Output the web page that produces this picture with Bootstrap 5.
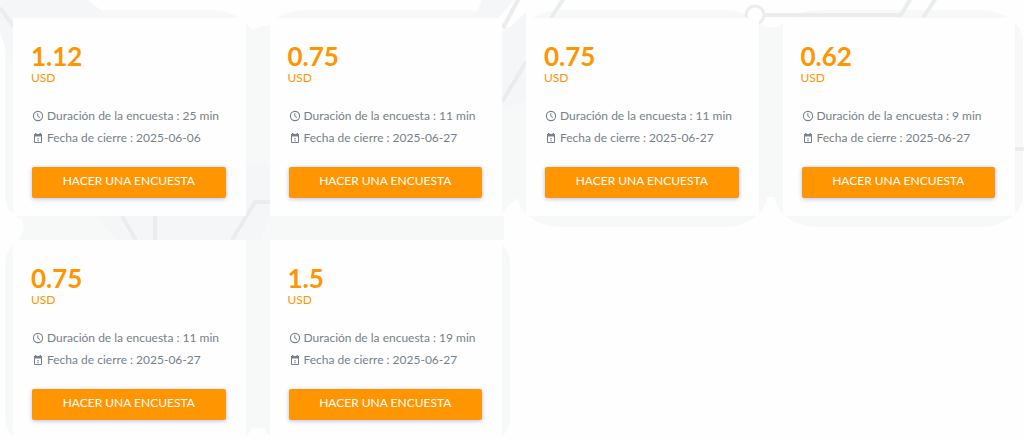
<!DOCTYPE html>
<html lang="es">
<head>
<meta charset="utf-8">
<meta name="viewport" content="width=device-width, initial-scale=1">
<title>Encuestas</title>
<link href="https://cdn.jsdelivr.net/npm/bootstrap@5.3.0/dist/css/bootstrap.min.css" rel="stylesheet">
<style>
  body { font-family: Lato, sans-serif; background: #fefefe; color: #77818a; overflow-x: hidden; }
  .survey-page { position: relative; z-index: 0; padding: 18px 9px 0 13px; overflow: hidden; }
  .backdrop { position: absolute; inset: 0 auto auto 0; z-index: -1; }
  .survey { position: relative; background: #fefefe; padding: 24px 20px 18px 18px; }
  .survey::before { content: ""; position: absolute; inset: -8px -8px -11px -8px; border-radius: 44px / 30px; background: #f7f9f9; z-index: -2; }
  .reward { color: #ff9500; margin: 0; }
  .amount { display: block; font-size: 26px; font-weight: 700; line-height: 29px; }
  .currency { display: block; font-size: 12px; line-height: 14px; }
  .facts { margin: 20px 0 18px 1px; font-size: 12px; line-height: 22px; }
  .facts li { display: flex; align-items: center; gap: 3px; white-space: nowrap; }
  .facts svg { flex: none; }
  .btn-survey { --bs-btn-color: #fff; --bs-btn-bg: #ff9500; --bs-btn-hover-color: #fff; --bs-btn-hover-bg: #e88700; --bs-btn-border-width: 0; margin-left: 1px; width: calc(100% - 1px); height: 31px; padding: 0 0 3px; border-radius: 2px; font-size: 12px; line-height: 28px; font-weight: 400; box-shadow: 0 1px 4px #b8baf0; }
</style>
</head>
<body>
<svg width="0" height="0" class="position-absolute" aria-hidden="true">
  <symbol id="clock" viewBox="0 0 12 12"><circle cx="6" cy="6" r="4.6" fill="none" stroke="currentColor" stroke-width="1.1"/><path d="M5.8 3.2v3l2.2 1.4" fill="none" stroke="currentColor"/></symbol>
  <symbol id="calendar" viewBox="0 0 12 12"><path d="M2.5 2.5h7v8h-7z" fill="none" stroke="currentColor"/><path d="M2 2h8v2.6H2zM3 1h1.4v2H3zM7.6 1H9v2H7.6zM5.4 6h1.2v1.2H5.4zM5.4 8h1.2v1.2H5.4z" fill="currentColor"/></symbol>
</svg>
<main class="container-fluid survey-page">
  <svg class="backdrop" width="1024" height="439" viewBox="0 0 1024 439" aria-hidden="true">
    <path fill="#f7f9f9" d="M246 28q5 3 10 0t14-2v190h-24zM503 28q5-2 10-1t13-1v171q-7-1-13 5t-10 0zM759 25q8 4 24 1v174q-12-6-24 0zM20 216h484v24H18q10-12 2-24zM246 240h24v190q-12-4-24 0z"/>
    <path fill="#f5f6f7" d="M0 0h88l22 18H13v52L0 32zM95 216h151v-52h24v52l-10 24H116zM482 0h32l-16 18h-24zM503 34l23-22v90l-23 6z"/>
    <g fill="none" stroke="#ebecee" stroke-width="4">
      <path d="M0 8l14 19M519-2l-16 30M564-2l-13 20M526 62l-24 40M764 15h137l10-17M936-2l-13 20M1014 149h10M270 202h-15l-23 38M122 216l14 24M155 216v24"/>
      <circle cx="755" cy="15" r="9" stroke-width="3" fill="#fefefe"/>
    </g>
  </svg>
  <div class="row row-cols-1 row-cols-sm-2 row-cols-md-4 g-4" id="surveys"></div>
</main>
<script>
  const surveys = [
    ["1.12", 25, "2025-06-06"], ["0.75", 11, "2025-06-27"], ["0.75", 11, "2025-06-27"],
    ["0.62", 9, "2025-06-27"], ["0.75", 11, "2025-06-27"], ["1.5", 19, "2025-06-27"]
  ];
  document.getElementById("surveys").innerHTML = surveys.map(([amount, minutes, date]) => `
    <div class="col"><article class="survey">
      <p class="reward"><span class="amount">${amount}</span><span class="currency">USD</span></p>
      <ul class="facts list-unstyled">
        <li><svg width="12" height="12" aria-hidden="true"><use href="#clock"/></svg><span>Duración de la encuesta : ${minutes} min</span></li>
        <li><svg width="12" height="12" aria-hidden="true"><use href="#calendar"/></svg><span>Fecha de cierre : ${date}</span></li>
      </ul>
      <button type="button" class="btn btn-survey">HACER UNA ENCUESTA</button>
    </article></div>`).join("");
</script>
<script src="https://cdn.jsdelivr.net/npm/bootstrap@5.3.0/dist/js/bootstrap.bundle.min.js"></script>
</body>
</html>
